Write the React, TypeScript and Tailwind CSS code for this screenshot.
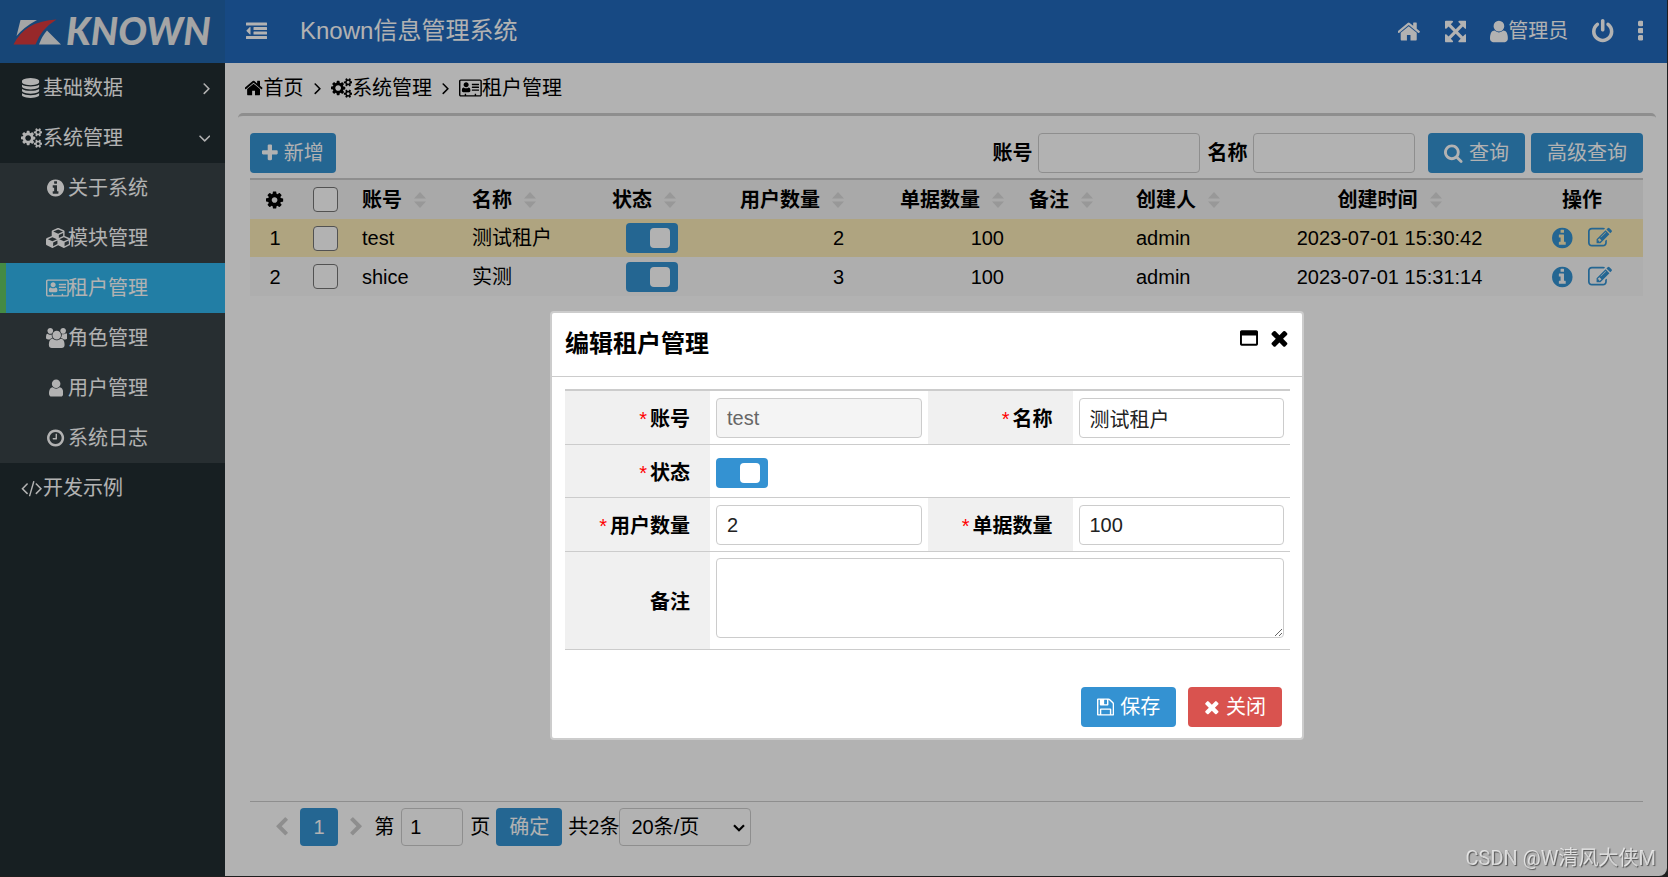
import { useState, type ReactNode } from 'react';
import clsx from 'clsx';

// Icon glyphs share a 1792-unit em square; x and w describe the horizontal box of each glyph.
const ICONS = {
  home: {
    x: 64,
    w: 1664,
    d: 'M1408 992v480q0 26-19 45t-45 19h-384v-384h-256v384h-384q-26 0-45-19t-19-45v-480q0-1 .5-3t.5-3l575-474 575 474q1 2 1 6zm223-69l-62 74q-8 9-21 11h-3q-13 0-21-7l-692-577-692 577q-12 8-24 7-13-2-21-11l-62-74q-8-10-7-23.5t11-21.5l719-599q32-26 76-26t76 26l244 204v-195q0-14 9-23t23-9h192q14 0 23 9t9 23v408l219 182q10 8 11 21.5t-7 23.5z',
  },
  database: {
    x: 128,
    w: 1536,
    d: 'M896 768q237 0 443-43t325-127v170q0 69-103 128t-280 93.5-385 34.5-385-34.5-280-93.5-103-128v-170q119 84 325 127t443 43zm0 768q237 0 443-43t325-127v170q0 69-103 128t-280 93.5-385 34.5-385-34.5-280-93.5-103-128v-170q119 84 325 127t443 43zm0-384q237 0 443-43t325-127v170q0 69-103 128t-280 93.5-385 34.5-385-34.5-280-93.5-103-128v-170q119 84 325 127t443 43zm0-1152q208 0 385 34.5t280 93.5 103 128v128q0 69-103 128t-280 93.5-385 34.5-385-34.5-280-93.5-103-128v-128q0-69 103-128t280-93.5 385-34.5z',
  },
  cog: {
    x: 128,
    w: 1536,
    d: 'M1152 896q0-106-75-181t-181-75-181 75-75 181 75 181 181 75 181-75 75-181zm512-109v222q0 12-8 23t-20 13l-185 28q-19 54-39 91 35 50 107 138 10 12 10 25t-9 23q-27 37-99 108t-94 71q-12 0-26-9l-138-108q-44 23-91 38-16 136-29 186-7 28-36 28h-222q-14 0-24.5-8.5t-11.5-21.5l-28-184q-49-16-90-37l-141 107q-10 9-25 9-14 0-25-11-126-114-165-168-7-10-7-23 0-12 8-23 15-21 51-66.5t54-70.5q-27-50-41-99l-183-27q-13-2-21-12.5t-8-23.5v-222q0-12 8-23t19-13l186-28q14-46 39-92-40-57-107-138-10-12-10-24 0-10 9-23 26-36 98.5-107.5t94.5-71.5q13 0 26 10l138 107q44-23 91-38 16-136 29-186 7-28 36-28h222q14 0 24.5 8.5t11.5 21.5l28 184q49 16 90 37l142-107q9-9 24-9 13 0 25 10 129 119 165 170 7 8 7 22 0 12-8 23-15 21-51 66.5t-54 70.5q26 50 41 98l183 28q13 2 21 12.5t8 23.5z',
  },
  cogs: {
    x: -64,
    w: 1920,
    d: 'M832 896q0-106-75-181t-181-75-181 75-75 181 75 181 181 75 181-75 75-181zm768 512q0-52-38-90t-90-38-90 38-38 90q0 53 37.5 90.5t90.5 37.5 90.5-37.5 37.5-90.5zm0-1024q0-52-38-90t-90-38-90 38-38 90q0 53 37.5 90.5t90.5 37.5 90.5-37.5 37.5-90.5zm-384 421v185q0 10-7 19.5t-16 10.5l-155 24q-11 35-32 76 34 48 90 115 7 11 7 20 0 12-7 19-23 30-82.5 89.5t-78.5 59.5q-11 0-21-7l-115-90q-37 19-77 31-11 108-23 155-7 24-30 24h-186q-11 0-20-7.5t-10-17.5l-23-153q-34-10-75-31l-118 89q-7 7-20 7-11 0-21-8-144-133-144-160 0-9 7-19 10-14 41-53t47-61q-23-44-35-82l-152-24q-10-1-17-9.5t-7-19.5v-185q0-10 7-19.5t16-10.5l155-24q11-35 32-76-34-48-90-115-7-11-7-20 0-12 7-20 22-30 82-89t79-59q11 0 21 7l115 90q34-18 77-32 11-108 23-154 7-24 30-24h186q11 0 20 7.5t10 17.5l23 153q34 10 75 31l118-89q8-7 20-7 11 0 21 8 144 133 144 160 0 8-7 19-12 16-42 54t-45 60q23 48 34 82l152 23q10 2 17 10.5t7 19.5zm640 533v140q0 16-149 31-12 27-30 52 51 113 51 138 0 4-4 7-122 71-124 71-8 0-46-47t-52-68q-20 2-30 2t-30-2q-14 21-52 68t-46 47q-2 0-124-71-4-3-4-7 0-25 51-138-18-25-30-52-149-15-149-31v-140q0-16 149-31 13-29 30-52-51-113-51-138 0-4 4-7 4-2 35-20t59-34 30-16q8 0 46 46.5t52 67.5q20-2 30-2t30 2q51-71 92-112l6-2q4 0 124 70 4 3 4 7 0 25-51 138 17 23 30 52 149 15 149 31zm0-1024v140q0 16-149 31-12 27-30 52 51 113 51 138 0 4-4 7-122 71-124 71-8 0-46-47t-52-68q-20 2-30 2t-30-2q-14 21-52 68t-46 47q-2 0-124-71-4-3-4-7 0-25 51-138-18-25-30-52-149-15-149-31v-140q0-16 149-31 13-29 30-52-51-113-51-138 0-4 4-7 4-2 35-20t59-34 30-16q8 0 46 46.5t52 67.5q20-2 30-2t30 2q51-71 92-112l6-2q4 0 124 70 4 3 4 7 0 25-51 138 17 23 30 52 149 15 149 31z',
  },
  info: {
    x: 128,
    w: 1536,
    d: 'M1152 1376v-160q0-14-9-23t-23-9h-96v-512q0-14-9-23t-23-9h-320q-14 0-23 9t-9 23v160q0 14 9 23t23 9h96v320h-96q-14 0-23 9t-9 23v160q0 14 9 23t23 9h448q14 0 23-9t9-23zm-128-896v-160q0-14-9-23t-23-9h-192q-14 0-23 9t-9 23v160q0 14 9 23t23 9h192q14 0 23-9t9-23zm640 416q0 209-103 385.5t-279.5 279.5-385.5 103-385.5-103-279.5-279.5-103-385.5 103-385.5 279.5-279.5 385.5-103 385.5 103 279.5 279.5 103 385.5z',
  },
  cubes: {
    x: -128,
    w: 2176,
    d: 'M512 1633l384-192v-314l-384 164v342zm-64-454l404-173-404-173-404 173zm1088 454l384-192v-314l-384 164v342zm-64-454l404-173-404-173-404 173zm-448-293l384-165v-266l-384 164v267zm-64-379l441-189-441-189-441 189zm1088 518v416q0 36-19 67t-52 47l-448 224q-25 14-57 14t-57-14l-448-224q-4-2-7-4-2 2-7 4l-448 224q-25 14-57 14t-57-14l-448-224q-33-16-52-47t-19-67v-416q0-38 21.5-70t56.5-48l434-186v-400q0-38 21.5-70t56.5-48l448-192q23-10 50-10t50 10l448 192q35 16 56.5 48t21.5 70v400l434 186q36 16 57 48t21 70z',
  },
  card: {
    x: 0,
    w: 2048,
    d: 'M1024 1131q0 64-37 106t-91 42h-512q-54 0-91-42t-37-106q0-120 42-205t130-85q90 83 212 83t212-83q88 0 130 85t42 205zM867 608q0 94-67 160t-160 66-160-66-67-160 67-160 160-66 160 66 67 160zM1792 1056v64q0 14-9 23t-23 9h-576q-14 0-23-9t-9-23v-64q0-14 9-23t23-9h576q14 0 23 9t9 23zM1792 800v64q0 14-9 23t-23 9h-576q-14 0-23-9t-9-23v-64q0-14 9-23t23-9h576q14 0 23 9t9 23zM1792 544v64q0 14-9 23t-23 9h-576q-14 0-23-9t-9-23v-64q0-14 9-23t23-9h576q14 0 23 9t9 23zM1920 1504v-1216q0-13-9-23t-23-9h-1728q-13 0-23 9t-9 23v1216q0 13 9 23t23 9h352v-96q0-14 9-23t23-9h64q14 0 23 9t9 23v96h768v-96q0-14 9-23t23-9h64q14 0 23 9t9 23v96h352q13 0 23-9t9-23zM2048 288v1216q0 66-47 113t-113 47h-1728q-66 0-113-47t-47-113v-1216q0-66 47-113t113-47h1728q66 0 113 47t47 113z',
  },
  users: {
    x: 64,
    w: 1920,
    d: 'M657 896q-162 5-265 128h-134q-82 0-138-40.5t-56-118.5q0-353 124-353 6 0 43.5 21t97.5 42.5 119 21.5q67 0 133-23-5 37-5 66 0 159 93 293zm1071 637q0 120-73 189.5t-194 69.5h-874q-121 0-194-69.5t-73-189.5q0-53 3.5-103.5t14-109 26.5-108.5 43-97.5 62-81 85.5-53.5 111.5-20q10 0 43 21.5t73 48 107 48 135 21.5 135-21.5 107-48 73-48 43-21.5q61 0 111.5 20t85.5 53.5 62 81 43 97.5 26.5 108.5 14 109 3.5 103.5zm-1024-1277q0 106-75 181t-181 75-181-75-75-181 75-181 181-75 181 75 75 181zm704 384q0 159-112.5 271.5t-271.5 112.5-271.5-112.5-112.5-271.5 112.5-271.5 271.5-112.5 271.5 112.5 112.5 271.5zm576 225q0 78-56 118.5t-138 40.5h-134q-103-123-265-128 93-134 93-293 0-29-5-66 66 23 133 23 59 0 119-21.5t97.5-42.5 43.5-21q124 0 124 353zm-128-609q0 106-75 181t-181 75-181-75-75-181 75-181 181-75 181 75 75 181z',
  },
  user: {
    x: 256,
    w: 1280,
    d: 'M1536 1399q0 109-62.5 187t-150.5 78h-854q-88 0-150.5-78t-62.5-187q0-85 8.5-160.5t31.5-152 58.5-131 94-89 134.5-34.5q131 128 313 128t313-128q76 0 134.5 34.5t94 89 58.5 131 31.5 152 8.5 160.5zm-256-887q0 159-112.5 271.5t-271.5 112.5-271.5-112.5-112.5-271.5 112.5-271.5 271.5-112.5 271.5 112.5 112.5 271.5z',
  },
  clock: {
    x: 128,
    w: 1536,
    d: 'M1024 544v448q0 14-9 23t-23 9h-320q-14 0-23-9t-9-23v-64q0-14 9-23t23-9h224v-352q0-14 9-23t23-9h64q14 0 23 9t9 23zm416 352q0-148-73-273t-198-198-273-73-273 73-198 198-73 273 73 273 198 198 273 73 273-73 198-198 73-273zm224 0q0 209-103 385.5t-279.5 279.5-385.5 103-385.5-103-279.5-279.5-103-385.5 103-385.5 279.5-279.5 385.5-103 385.5 103 279.5 279.5 103 385.5z',
  },
  code: {
    x: 64,
    w: 1920,
    d: 'M681 1399l-50 50q-10 10-23 10t-23-10l-466-466q-10-10-10-23t10-23l466-466q10-10 23-10t23 10l50 50q10 10 10 23t-10 23l-393 393 393 393q10 10 10 23t-10 23zm591-1067l-373 1291q-4 13-15.5 19.5t-23.5 2.5l-62-17q-13-4-19.5-15.5t-2.5-24.5l373-1291q4-13 15.5-19.5t23.5-2.5l62 17q13 4 19.5 15.5t2.5 24.5zm657 651l-466 466q-10 10-23 10t-23-10l-50-50q-10-10-10-23t10-23l393-393-393-393q-10-10-10-23t10-23l50-50q10-10 23-10t23 10l466 466q10 10 10 23t-10 23z',
  },
  angleRight: {
    x: 560,
    w: 640,
    d: 'M1171 960q0 13-10 23l-466 466q-10 10-23 10t-23-10l-50-50q-10-10-10-23t10-23l393-393-393-393q-10-10-10-23t10-23l50-50q10-10 23-10t23 10l466 466q10 10 10 23z',
  },
  angleDown: {
    x: 384,
    w: 1024,
    d: 'M1395 736q0 13-10 23l-466 466q-10 10-23 10t-23-10l-466-466q-10-10-10-23t10-23l50-50q10-10 23-10t23 10l393 393 393-393q10-10 23-10t23 10l50 50q10 10 10 23z',
  },
  outdent: {
    x: 0,
    w: 1792,
    d: 'M384 544v576q0 13-9.500 22.500t-22.500 9.500q-14 0-23-9l-288-288q-9-9-9-23t9-23l288-288q9-9 23-9 13 0 22.500 9.500t9.500 22.500zM32 1280h1728q32 0 32 32v192q0 32-32 32h-1728q-32 0-32-32v-192q0-32 32-32zM672 896h1088q32 0 32 32v192q0 32-32 32h-1088q-32 0-32-32v-192q0-32 32-32zM672 512h1088q32 0 32 32v192q0 32-32 32h-1088q-32 0-32-32v-192q0-32 32-32zM32 128h1728q32 0 32 32v192q0 32-32 32h-1728q-32 0-32-32v-192q0-32 32-32z',
  },
  arrows: {
    x: 128,
    w: 1536,
    d: 'M1411 541l-355 355 355 355 144-144q29-31 70-14 39 17 39 59v448q0 26-19 45t-45 19h-448q-42 0-59-40-17-39 14-69l144-144-355-355-355 355 144 144q31 30 14 69-17 40-59 40h-448q-26 0-45-19t-19-45v-448q0-42 40-59 39-17 69 14l144 144 355-355-355-355-144 144q-19 19-45 19-12 0-24-5-40-17-40-59v-448q0-26 19-45t45-19h448q42 0 59 40 17 39-14 69l-144 144 355 355 355-355-144-144q-31-30-14-69 17-40 59-40h448q26 0 45 19t19 45v448q0 42-39 59-13 5-25 5-26 0-45-19z',
  },
  power: {
    x: 128,
    w: 1536,
    d: 'M1664 896q0 156-61 298t-164 245-245 164-298 61-298-61-245-164-164-245-61-298q0-182 80.5-343t226.5-270q43-32 95.5-25t83.5 50q32 42 24.5 94.5t-49.5 84.5q-98 74-151.5 181t-53.5 228q0 104 40.5 198.5t109.5 163.5 163.5 109.5 198.5 40.5 198.5-40.5 163.5-109.5 109.5-163.5 40.5-198.5q0-121-53.5-228t-151.5-181q-42-32-49.5-84.5t24.5-94.5q31-43 84-50t95 25q146 109 226.5 270t80.5 343zm-640-768v640q0 52-38 90t-90 38-90-38-38-90v-640q0-52 38-90t90-38 90 38 38 90z',
  },
  ellipsis: {
    x: 704,
    w: 384,
    d: 'M1088 1248v192q0 40-28 68t-68 28h-192q-40 0-68-28t-28-68v-192q0-40 28-68t68-28h192q40 0 68 28t28 68zm0-512v192q0 40-28 68t-68 28h-192q-40 0-68-28t-28-68v-192q0-40 28-68t68-28h192q40 0 68 28t28 68zm0-512v192q0 40-28 68t-68 28h-192q-40 0-68-28t-28-68v-192q0-40 28-68t68-28h192q40 0 68 28t28 68z',
  },
  plus: {
    x: 192,
    w: 1408,
    d: 'M1600 736v192q0 40-28 68t-68 28h-416v416q0 40-28 68t-68 28h-192q-40 0-68-28t-28-68v-416h-416q-40 0-68-28t-28-68v-192q0-40 28-68t68-28h416v-416q0-40 28-68t68-28h192q40 0 68 28t28 68v416h416q40 0 68 28t28 68z',
  },
  search: {
    x: 64,
    w: 1664,
    d: 'M1216 832q0-185-131.5-316.5t-316.5-131.5-316.5 131.5-131.5 316.5 131.5 316.5 316.5 131.5 316.5-131.5 131.5-316.5zm512 832q0 52-38 90t-90 38q-54 0-90-38l-343-342q-179 124-399 124-143 0-273.5-55.5t-225-150-150-225-55.5-273.5 55.5-273.5 150-225 225-150 273.5-55.5 273.5 55.5 225 150 150 225 55.5 273.5q0 220-124 399l343 343q37 37 37 90z',
  },
  times: {
    x: 192,
    w: 1408,
    d: 'M1490 1322q0 40-28 68l-136 136q-28 28-68 28t-68-28l-294-294-294 294q-28 28-68 28t-68-28l-136-136q-28-28-28-68t28-68l294-294-294-294q-28-28-28-68t28-68l136-136q28-28 68-28t68 28l294 294 294-294q28-28 68-28t68 28l136 136q28 28 28 68t-28 68l-294 294 294 294q28 28 28 68z',
  },
  edit: {
    x: 0,
    w: 1792,
    d: 'M888 1184l116-116-152-152-116 116v56h96v96h56zm440-720q-16-16-33 1l-350 350q-17 17-1 33t33-1l350-350q17-17 1-33zm80 594v190q0 119-84.500 203.500t-203.500 84.500h-832q-119 0-203.500-84.500t-84.500-203.500v-832q0-119 84.500-203.500t203.500-84.500h832q63 0 117 25 15 7 18 23 3 17-9 29l-49 49q-14 14-32 8-23-6-45-6h-832q-66 0-113 47t-47 113v832q0 66 47 113t113 47h832q66 0 113-47t47-113v-126q0-13 9-22l64-64q15-15 35-7t20 29zm-96-738l288 288-672 672h-288v-288zm444 132l-92 92-288-288 92-92q28-28 68-28t68 28l152 152q28 28 28 68t-28 68z',
  },
  save: {
    x: 128,
    w: 1536,
    d: 'M512 1536h768v-384h-768v384zm896 0h128v-896q0-14-10-38.5t-20-34.5l-281-281q-10-10-34-20t-39-10v416q0 40-28 68t-68 28h-576q-40 0-68-28t-28-68v-416h-128v1280h128v-416q0-40 28-68t68-28h832q40 0 68 28t28 68v416zm-384-928v-320q0-13-9.5-22.5t-22.5-9.5h-192q-13 0-22.5 9.5t-9.5 22.5v320q0 13 9.5 22.5t22.5 9.5h192q13 0 22.5-9.5t9.5-22.5zm640 32v928q0 40-28 68t-68 28h-1344q-40 0-68-28t-28-68v-1344q0-40 28-68t68-28h928q40 0 88 20t76 48l280 280q28 28 48 76t20 88z',
  },
  maximize: {
    x: 0,
    w: 1792,
    d: 'M192 1472h1408v-832h-1408v832zm1600-1184v1216q0 66-47 113t-113 47h-1472q-66 0-113-47t-47-113v-1216q0-66 47-113t113-47h1472q66 0 113 47t47 113z',
  },
  chevronLeft: {
    x: 384,
    w: 1088,
    d: 'M1427 301l-531 531 531 531q19 19 19 45t-19 45l-166 166q-19 19-45 19t-45-19l-742-742q-19-19-19-45t19-45l742-742q19-19 45-19t45 19l166 166q19 19 19 45t-19 45z',
  },
  chevronRight: {
    x: 320,
    w: 1088,
    d: 'M1363 877l-742 742q-19 19-45 19t-45-19l-166-166q-19-19-19-45t19-45l531-531-531-531q-19-19-19-45t19-45l166-166q19-19 45-19t45 19l742 742q19 19 19 45t-19 45z',
  },
};

type IconName = keyof typeof ICONS;

function Icon({ name, size = 20 }: { name: IconName; size?: number }) {
  const { x, w, d } = ICONS[name];
  return (
    <svg
      className="block shrink-0"
      viewBox={`${x} 0 ${w} 1792`}
      width={(size * w) / 1792}
      height={size}
      fill="currentColor"
      aria-hidden="true"
    >
      <path d={d} />
    </svg>
  );
}

const SUB_MENU: { icon: IconName; label: string }[] = [
  { icon: 'info', label: '关于系统' },
  { icon: 'cubes', label: '模块管理' },
  { icon: 'card', label: '租户管理' },
  { icon: 'users', label: '角色管理' },
  { icon: 'user', label: '用户管理' },
  { icon: 'clock', label: '系统日志' },
];

const TENANTS = [
  { code: 'test', name: '测试租户', users: 2, bills: 100, creator: 'admin', time: '2023-07-01 15:30:42' },
  { code: 'shice', name: '实测', users: 3, bills: 100, creator: 'admin', time: '2023-07-01 15:31:14' },
];

function Logo() {
  return (
    <div className="flex w-[225px] shrink-0 items-center bg-[#2265ab] pb-1 pl-[13px] text-[#ececec]">
      <svg className="mt-1 h-[28px] w-[48px] shrink-0" viewBox="13 17 48 28" aria-hidden="true">
        <path d="M20.500 19H37Q24 26 16.500 35Z" fill="#ececec" />
        <path d="M56.500 18.500Q41 28 35.500 43.500H13.500Q25 20 56.500 18.500Z" fill="#d93a3d" />
        <path d="M47 29.500L61 43.500H39Q42 35 47 29.500Z" fill="#ececec" />
      </svg>
      <span className="ml-[5px] font-[Lato,sans-serif] text-[38px] leading-none font-black italic">KNOWN</span>
    </div>
  );
}

function Header() {
  return (
    <header className="flex h-[63px] bg-[#2269bc] text-white">
      <Logo />
      <div className="flex flex-1 items-center pr-6 pb-px pl-[21px]">
        <button type="button" aria-label="折叠菜单" className="flex">
          <Icon name="outdent" size={21} />
        </button>
        <h1 className="ml-[33px] text-[24px]">Known信息管理系统</h1>
        <nav className="ml-auto flex items-center gap-6">
          <a href="#home" aria-label="首页" className="flex">
            <Icon name="home" size={25} />
          </a>
          <button type="button" aria-label="全屏" className="flex">
            <Icon name="arrows" size={25} />
          </button>
          <a href="#profile" className="flex items-center">
            <Icon name="user" size={25} />
            管理员
          </a>
          <button type="button" aria-label="退出" className="flex">
            <Icon name="power" size={25} />
          </button>
          <button type="button" aria-label="更多" className="flex">
            <Icon name="ellipsis" size={25} />
          </button>
        </nav>
      </div>
    </header>
  );
}

function MenuItem({
  icon,
  label,
  sub,
  active,
  arrow,
}: {
  icon: IconName;
  label: string;
  sub?: boolean;
  active?: boolean;
  arrow?: IconName;
}) {
  return (
    <a
      href={`#${icon}`}
      className={clsx(
        'flex h-[50px] items-center border-l-6 pr-[15px]',
        sub ? 'pl-10' : 'pl-[15px]',
        active ? 'border-[#62c662] bg-[#32b5ed]' : 'border-transparent',
      )}
    >
      <span className="mr-[2px] flex w-5 justify-center-safe">
        <Icon name={icon} />
      </span>
      {label}
      {arrow && (
        <span className="ml-auto">
          <Icon name={arrow} />
        </span>
      )}
    </a>
  );
}

function Sidebar() {
  return (
    <nav className="w-[225px] shrink-0 bg-[#222d32] text-white">
      <MenuItem icon="database" label="基础数据" arrow="angleRight" />
      <MenuItem icon="cogs" label="系统管理" arrow="angleDown" />
      <div className="bg-[#384247]">
        {SUB_MENU.map((m) => (
          <MenuItem key={m.icon} icon={m.icon} label={m.label} sub active={m.icon === 'card'} />
        ))}
      </div>
      <MenuItem icon="code" label="开发示例" />
    </nav>
  );
}

function Crumb({ icon, children }: { icon: IconName; children: ReactNode }) {
  return (
    <a href={`#${icon}`} className="flex items-center">
      <Icon name={icon} />
      {children}
    </a>
  );
}

function Switch({ id, label, className }: { id?: string; label: string; className?: string }) {
  const [on, setOn] = useState(true);
  return (
    <input
      id={id}
      type="checkbox"
      role="switch"
      aria-label={label}
      checked={on}
      onChange={() => setOn(!on)}
      className={clsx(
        'flex h-[30px] w-[52px] appearance-none items-center rounded bg-[#3492d2] px-2 before:size-5 before:rounded before:bg-white',
        on && 'justify-end',
        className,
      )}
    />
  );
}

function Check({ label }: { label: string }) {
  return (
    <input
      type="checkbox"
      aria-label={label}
      className="block size-[25px] appearance-none rounded border border-[#767676] bg-white checked:bg-[#3492d2]"
    />
  );
}

function SortIcon() {
  return (
    <svg className="ml-3 h-4 w-3 shrink-0" viewBox="0 0 12 16" fill="#dadada" aria-hidden="true">
      <path d="M6 0L12 6.500H0Z M0 9.500H12L6 16Z" />
    </svg>
  );
}

function Th({
  children,
  align,
  className = 'px-[10px]',
}: {
  children: ReactNode;
  align?: 'center' | 'right';
  className?: string;
}) {
  return (
    <th className={clsx('font-bold', className)}>
      <div
        className={clsx(
          'flex items-center',
          align === 'center' && 'justify-center',
          align === 'right' && 'justify-end',
        )}
      >
        {children}
        <SortIcon />
      </div>
    </th>
  );
}

function TenantTable() {
  return (
    <table className="w-full table-fixed border-t-2 border-[#ccc] text-left">
      <colgroup>
        <col className="w-[50px]" />
        <col className="w-[52px]" />
        <col className="w-[110px]" />
        <col className="w-[116px]" />
        <col className="w-[132px]" />
        <col className="w-[144px]" />
        <col className="w-[160px]" />
        <col className="w-[94px]" />
        <col className="w-[150px]" />
        <col />
        <col className="w-[122px]" />
      </colgroup>
      <thead>
        <tr className="h-10 bg-[#f2f2f2]">
          <th>
            <button type="button" aria-label="列设置" className="mx-auto flex">
              <Icon name="cog" />
            </button>
          </th>
          <th className="px-[13px]">
            <Check label="全选" />
          </th>
          <Th>账号</Th>
          <Th>名称</Th>
          <Th align="center">状态</Th>
          <Th align="right">用户数量</Th>
          <Th align="right">单据数量</Th>
          <Th align="center">备注</Th>
          <Th className="px-7">创建人</Th>
          <Th align="center">创建时间</Th>
          <th className="text-center">操作</th>
        </tr>
      </thead>
      <tbody>
        {TENANTS.map((t, i) => (
          <tr key={t.code} className={clsx(i === 0 ? 'h-[38px] bg-[#fbebb8]' : 'h-[39px] bg-[#fafafa]')}>
            <td className="text-center">{i + 1}</td>
            <td className="px-[13px]">
              <Check label={`选择 ${t.code}`} />
            </td>
            <td className="px-[10px]">{t.code}</td>
            <td className="px-[10px]">{t.name}</td>
            <td>
              <Switch label={`${t.code} 状态`} className="ml-12" />
            </td>
            <td className="px-[10px] text-right">{t.users}</td>
            <td className="px-[10px] text-right">{t.bills}</td>
            <td />
            <td className="px-7">{t.creator}</td>
            <td className="px-[10px] text-center">{t.time}</td>
            <td className="text-[#3492d2]">
              <div className="flex items-center justify-center gap-[15px]">
                <button type="button" aria-label="查看">
                  <Icon name="info" size={24} />
                </button>
                <button type="button" aria-label="编辑">
                  <Icon name="edit" size={24} />
                </button>
              </div>
            </td>
          </tr>
        ))}
      </tbody>
    </table>
  );
}

function Toolbar() {
  return (
    <div className="mb-[5px] flex h-10 items-center">
      <button
        type="button"
        className="flex h-10 items-center gap-[6px] rounded bg-[#3492d2] px-3 text-white"
      >
        <Icon name="plus" />
        新增
      </button>
      <label htmlFor="q-code" className="ml-auto font-bold">
        账号
      </label>
      <input id="q-code" className="ml-[6px] h-10 w-[162px] rounded border border-[#ccc] bg-white px-[10px]" />
      <label htmlFor="q-name" className="ml-[7px] font-bold">
        名称
      </label>
      <input id="q-name" className="ml-[6px] h-10 w-[162px] rounded border border-[#ccc] bg-white px-[10px]" />
      <button
        type="button"
        className="ml-[13px] flex h-10 items-center gap-[6px] rounded bg-[#3492d2] px-4 text-white"
      >
        <Icon name="search" />
        查询
      </button>
      <button type="button" className="ml-[6px] h-10 rounded bg-[#3492d2] px-4 text-white">
        高级查询
      </button>
    </div>
  );
}

function Pager() {
  return (
    <div className="mt-auto flex h-[75px] items-start border-t border-[#ccc] pt-[6px] pl-[26px]">
      <div className="flex h-[38px] items-center">
        <button type="button" aria-label="上一页" className="flex text-[#ccc]">
          <Icon name="chevronLeft" />
        </button>
        <button type="button" className="mx-3 size-[38px] rounded bg-[#3492d2] text-white">
          1
        </button>
        <button type="button" aria-label="下一页" className="flex text-[#ccc]">
          <Icon name="chevronRight" />
        </button>
        <label htmlFor="page-no" className="ml-3">
          第
        </label>
        <input
          id="page-no"
          defaultValue="1"
          className="mx-[7px] h-[38px] w-[62px] rounded border border-[#ccc] bg-white px-2"
        />
        页
        <button type="button" className="mx-[6px] h-[38px] rounded bg-[#3492d2] px-[13px] text-white">
          确定
        </button>
        共2条
        <span className="relative flex">
          <select
            aria-label="每页条数"
            className="h-[38px] w-[132px] appearance-none rounded border border-[#ccc] bg-white pl-[11px]"
          >
            <option>20条/页</option>
            <option>50条/页</option>
          </select>
          <svg
            className="pointer-events-none absolute top-4 right-[6px] h-2 w-3"
            viewBox="0 0 12 8"
            fill="none"
            stroke="black"
            strokeWidth="2.2"
            aria-hidden="true"
          >
            <path d="M1 1.200L6 6.200L11 1.200" />
          </svg>
        </span>
      </div>
    </div>
  );
}

function FieldLabel({ htmlFor, required, children }: { htmlFor: string; required?: boolean; children: ReactNode }) {
  return (
    <th className="bg-[#f0f0f0] pt-1 pr-5 text-right font-bold">
      <label htmlFor={htmlFor}>
        {required && <span className="mr-[3px] font-normal text-[#f00]">*</span>}
        {children}
      </label>
    </th>
  );
}

function TextField({ id, value, disabled }: { id: string; value: string; disabled?: boolean }) {
  return (
    <td className="px-[6px] pt-[2px]">
      <input
        id={id}
        defaultValue={value}
        disabled={disabled}
        className="block h-10 w-full rounded border border-[#ccc] bg-white px-[10px] text-[#222] disabled:bg-[#f4f4f4] disabled:text-[#666]"
      />
    </td>
  );
}

function EditDialog() {
  return (
    <section
      role="dialog"
      aria-labelledby="dialog-title"
      className="fixed top-[311px] left-[550px] w-[754px] rounded border-2 border-[#ccc] bg-white"
    >
      <div className="flex h-16 items-start justify-between border-b border-[#ccc] px-[13px]">
        <h2 id="dialog-title" className="pt-[13px] text-[24px] leading-9 font-bold">
          编辑租户管理
        </h2>
        <div className="flex h-[50px] items-center gap-3">
          <button type="button" aria-label="最大化" className="flex">
            <Icon name="maximize" size={18} />
          </button>
          <button type="button" aria-label="关闭窗口" className="flex">
            <Icon name="times" size={24} />
          </button>
        </div>
      </div>
      <form className="pt-3 pr-3 pb-[11px] pl-[13px]">
        <table className="w-full table-fixed border-t-2 border-[#ccc] text-left">
          <colgroup>
            <col className="w-[145px]" />
            <col />
            <col className="w-[145px]" />
            <col />
          </colgroup>
          <tbody>
            <tr className="h-[54px] border-b border-[#ccc]">
              <FieldLabel htmlFor="f-code" required>
                账号
              </FieldLabel>
              <TextField id="f-code" value="test" disabled />
              <FieldLabel htmlFor="f-name" required>
                名称
              </FieldLabel>
              <TextField id="f-name" value="测试租户" />
            </tr>
            <tr className="h-[53px] border-b border-[#ccc]">
              <FieldLabel htmlFor="f-status" required>
                状态
              </FieldLabel>
              <td colSpan={3} className="px-[6px] pt-1">
                <Switch id="f-status" label="状态" />
              </td>
            </tr>
            <tr className="h-[54px] border-b border-[#ccc]">
              <FieldLabel htmlFor="f-users" required>
                用户数量
              </FieldLabel>
              <TextField id="f-users" value="2" />
              <FieldLabel htmlFor="f-bills" required>
                单据数量
              </FieldLabel>
              <TextField id="f-bills" value="100" />
            </tr>
            <tr className="h-[98px] border-b border-[#ccc]">
              <FieldLabel htmlFor="f-note">备注</FieldLabel>
              <td colSpan={3} className="px-[6px] pt-[6px] align-top">
                <textarea id="f-note" className="block h-20 w-full rounded border border-[#ccc] bg-white px-[10px]" />
              </td>
            </tr>
          </tbody>
        </table>
        <div className="mt-[37px] flex justify-end gap-3 pr-2">
          <button
            type="button"
            className="flex h-10 items-center gap-[6px] rounded bg-[#3492d2] px-4 text-white"
          >
            <Icon name="save" />
            保存
          </button>
          <button
            type="button"
            className="flex h-10 items-center gap-[6px] rounded bg-[#d9534f] px-4 text-white"
          >
            <Icon name="times" />
            关闭
          </button>
        </div>
      </form>
    </section>
  );
}

export default function App() {
  return (
    <div className="min-h-screen bg-[#2c2c2c] pr-px pb-px font-['Liberation_Sans','Noto_Sans_CJK_SC',sans-serif] text-[20px] leading-[30px] text-black">
      <div className="flex min-h-[calc(100vh-1px)] flex-col overflow-hidden rounded-br-lg bg-white">
        <Header />
        <div className="flex flex-1">
          <Sidebar />
          <main className="flex min-w-0 flex-1 flex-col pr-[11px] pl-[13px]">
            <nav className="flex h-[50px] items-center gap-[10px] pl-[7px]">
              <Crumb icon="home">首页</Crumb>
              <Icon name="angleRight" />
              <Crumb icon="cogs">系统管理</Crumb>
              <Icon name="angleRight" />
              <Crumb icon="card">租户管理</Crumb>
            </nav>
            <div className="flex flex-1 flex-col rounded-t-[5px] border-t-3 border-[#ccc] pt-[17px] pr-[13px] pl-3">
              <Toolbar />
              <TenantTable />
              <Pager />
            </div>
          </main>
        </div>
      </div>
      <div className="fixed inset-0 bg-black/30" />
      <EditDialog />
      <span className="fixed right-3 bottom-1 font-['Roboto','Noto_Sans_CJK_SC',sans-serif] text-[20px] text-white/70 [text-shadow:1px_1px_1px_#555]">
        CSDN @W清风大侠M
      </span>
    </div>
  );
}
